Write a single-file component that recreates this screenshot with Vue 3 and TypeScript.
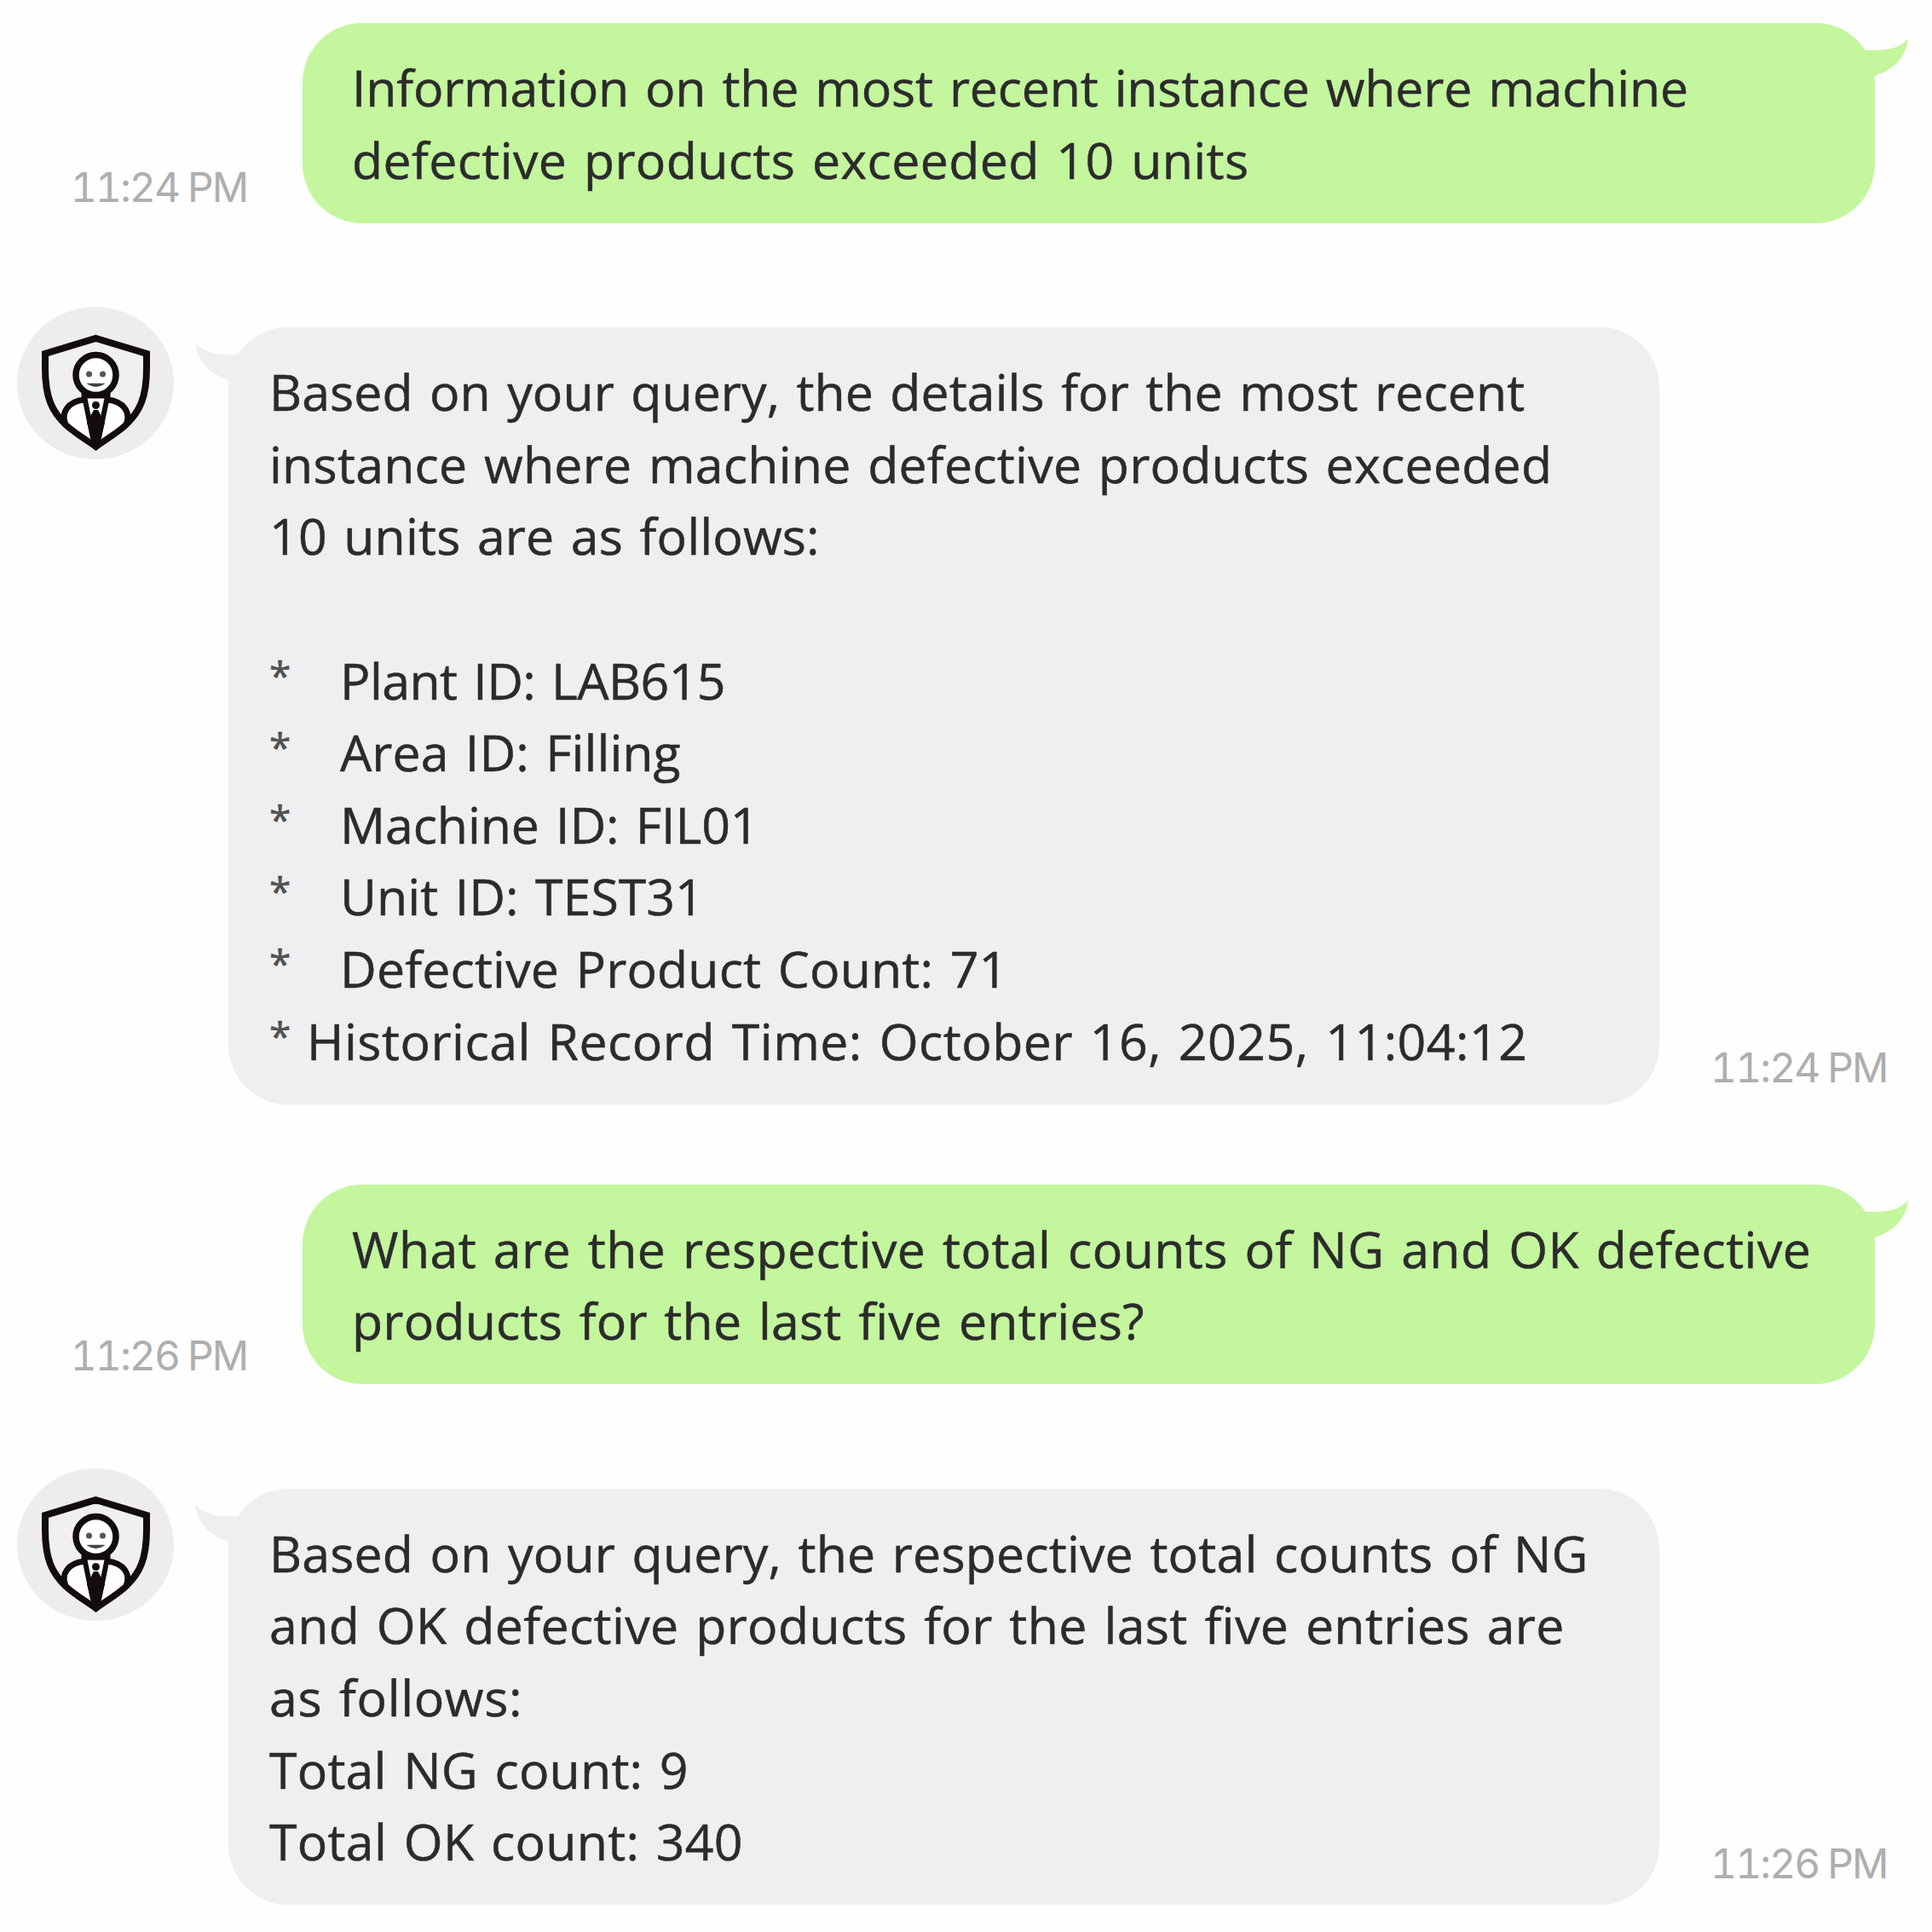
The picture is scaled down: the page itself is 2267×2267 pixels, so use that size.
<template>
  <main class="chat">
    <section v-for="(msg, i) in messages" :key="i" class="row" :class="msg.from">
      <!-- avatar -->
      <svg v-if="msg.from === 'bot'" class="avatar" viewBox="0 0 184 179">
        <ellipse cx="92" cy="89.500" rx="92" ry="89.500" fill="#ededeb" />
        <g fill="none" stroke="#120c0c" stroke-width="8" stroke-linejoin="miter" stroke-linecap="round">
          <path class="fill" d="M92.500 37 L152 55 V72 C152 106 144 123 128 138 C116 149 103 156 92.500 164 C82 156 69 149 57 138 C41 123 33 106 33 72 V55 Z" />
          <path class="white" d="M57 138 C51 124 60 111 79 109 V104 H106 V109 C125 111 134 124 128 138 C116 149 103 156 92.500 164 C82 156 69 149 57 138 Z" stroke-width="7" />
          <circle class="white" cx="92.500" cy="80" r="23.500" stroke-width="7.500" />
          <path d="M80 110 L89 154 M105 110 L96 154" stroke-width="6" />
        </g>
        <circle cx="92.500" cy="115.500" r="4.500" fill="#120c0c" />
        <path d="M90 121 h5 l8 15 -8 28 h-5 l-8 -28 Z" fill="#120c0c" />
        <circle cx="84.500" cy="79" r="3.500" fill="#555" />
        <circle cx="100.500" cy="79" r="3.500" fill="#555" />
        <path d="M84 90.500 H101 Q92.500 96 84 90.500 Z" fill="#444" stroke="#444" stroke-width="1.500" />
      </svg>

      <div class="bubble">
        <svg class="tail" viewBox="0 0 60 50">
          <path d="M0 0 C7 9 19 14 40 14 H52 L60 20 V50 L39 44 C18 37 3 24 0 0 Z" />
        </svg>
        <p v-for="(line, j) in msg.lines" :key="j">
          <span v-if="line.bullet" class="bullet" :class="line.bullet">*</span>
          <span :style="{ letterSpacing: line.spacing + 'px' }">{{ line.text }}</span>
        </p>
      </div>
      <time>{{ msg.time }}</time>
    </section>
  </main>
</template>

<script setup lang="ts">
interface Line {
  text: string
  spacing: number
  bullet?: 'wide' | 'narrow'
}

interface Message {
  from: 'user' | 'bot'
  time: string
  lines: Line[]
}

const messages: Message[] = [
  {
    from: 'user',
    time: '11:24 PM',
    lines: [
      { text: 'Information on the most recent instance where machine', spacing: -0.2 },
      { text: 'defective products exceeded 10 units', spacing: 0.36 },
    ],
  },
  {
    from: 'bot',
    time: '11:24 PM',
    lines: [
      { text: 'Based on your query, the details for the most recent', spacing: 0.07 },
      { text: 'instance where machine defective products exceeded', spacing: 0.23 },
      { text: '10 units are as follows:', spacing: 0.15 },
      { text: '', spacing: 0 },
      { text: 'Plant ID: LAB615', spacing: -0.58, bullet: 'wide' },
      { text: 'Area ID: Filling', spacing: 0.04, bullet: 'wide' },
      { text: 'Machine ID: FIL01', spacing: -0.1, bullet: 'wide' },
      { text: 'Unit ID: TEST31', spacing: 0.05, bullet: 'wide' },
      { text: 'Defective Product Count: 71', spacing: 0.15, bullet: 'wide' },
      { text: 'Historical Record Time: October 16, 2025, 11:04:12', spacing: 0.48, bullet: 'narrow' },
    ],
  },
  {
    from: 'user',
    time: '11:26 PM',
    lines: [
      { text: 'What are the respective total counts of NG and OK defective', spacing: 0.4 },
      { text: 'products for the last five entries?', spacing: 0.22 },
    ],
  },
  {
    from: 'bot',
    time: '11:26 PM',
    lines: [
      { text: 'Based on your query, the respective total counts of NG', spacing: 0.17 },
      { text: 'and OK defective products for the last five entries are', spacing: 0.36 },
      { text: 'as follows:', spacing: 0.62 },
      { text: 'Total NG count: 9', spacing: 0.2 },
      { text: 'Total OK count: 340', spacing: 0.28 },
    ],
  },
]
</script>

<style>
body {
  background: #fefefe;
}
</style>

<style scoped>
.chat {
  box-sizing: border-box;
  width: 2267px;
  height: 2267px;
  padding: 27px 0 0;
  overflow: hidden;
  font-family: 'Open Sans', 'Noto Sans', sans-serif;
  color: #2b2b2b;
}

.row {
  display: flex;
  align-items: flex-end;
}

.row.user {
  flex-direction: row-reverse;
  padding-right: 67px;
}

.row.bot {
  padding: 122.5px 0 94px 20px;
}

.bubble {
  position: relative;
  box-sizing: border-box;
  padding: 33px 0 32.5px 48px;
  border-radius: 70px;
}

.user .bubble {
  width: 1845px;
  padding-left: 58px;
  background: #c3f69d;
  fill: #c3f69d;
}

.bot .bubble {
  width: 1679px;
  margin-left: 64px;
  background: #efefef;
  fill: #efefef;
}

.bubble p {
  display: flex;
  height: 84.6px;
  margin: 0;
  font-size: 59px;
  line-height: 84.6px;
  word-spacing: 4px;
  white-space: pre;
  -webkit-text-stroke: 0.5px #2b2b2b;
}

.bullet {
  font-size: 46px;
  line-height: 72px;
  color: #555;
}

.bullet.wide {
  width: 83px;
}

.bullet.narrow {
  width: 44px;
}

.tail {
  position: absolute;
  top: 18px;
  left: -39px;
  width: 60px;
  height: 50px;
}

.user .tail {
  right: -39px;
  left: auto;
  transform: scaleX(-1);
}

.avatar {
  align-self: flex-start;
  width: 184px;
  height: 179px;
  margin-top: -24px;
}

.avatar .fill {
  fill: #f0f0ee;
}

.avatar .white {
  fill: #fff;
}

time {
  padding-bottom: 12px;
  font-family: Inter, sans-serif;
  font-size: 48px;
  font-variant-numeric: tabular-nums;
  line-height: 60px;
  letter-spacing: -2px;
  word-spacing: -1px;
  white-space: nowrap;
  color: #aeaeae;
}

.user time {
  margin-right: 65px;
}

.bot time {
  margin-left: 60px;
}

.row:nth-child(2) time {
  padding-bottom: 13px;
}

.row:nth-child(3) time {
  padding-bottom: 3px;
}

.row:nth-child(4) time {
  padding-bottom: 18px;
}
</style>
